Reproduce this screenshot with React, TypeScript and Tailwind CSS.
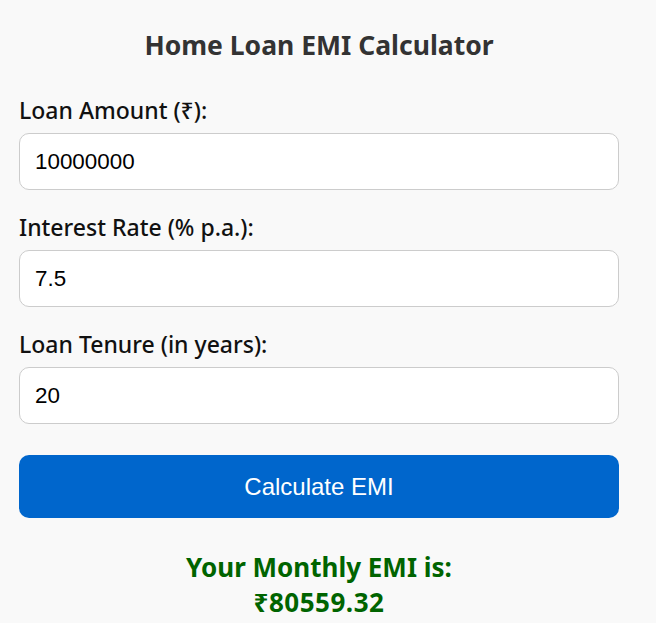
export default function App() {
  const labelCls = "block text-[23px] leading-[24px] font-medium text-[#111] mb-[11px]";
  const inputCls =
    "w-full h-[57px] rounded-[10px] border border-[#cccccc] bg-white px-[15px] text-[22.4px] text-black outline-none";
  const arial = { fontFamily: '"Liberation Sans", Arial, sans-serif' };
  return (
    <div className="min-h-screen bg-[#f9f9f9] pt-[30px] pl-[19px]" style={{ fontFamily: '"Noto Sans", sans-serif' }}>
      <div className="w-[600px] flex flex-col">
        <h2 className="text-center text-[26.5px] leading-[30px] font-bold text-[#333] mb-[38px]">Home Loan EMI Calculator</h2>

        <label className={labelCls}>Loan Amount (₹):</label>
        <input className={inputCls} style={arial} defaultValue="10000000" />

        <label className={labelCls + " mt-[25px]"}>Interest Rate (% p.a.):</label>
        <input className={inputCls} style={arial} defaultValue="7.5" />

        <label className={labelCls + " mt-[25px]"}>Loan Tenure (in years):</label>
        <input className={inputCls} style={arial} defaultValue="20" />

        <button className="mt-[31px] h-[63px] w-full rounded-[10px] bg-[#0066cc] text-white text-[24px]" style={arial}>
          Calculate EMI
        </button>

        <div className="mt-[32px] text-center text-[26px] leading-[35px] font-bold text-[#006400]">
          <div>Your Monthly EMI is:</div>
          <div className="tracking-[0.5px]">₹80559.32</div>
        </div>
      </div>
    </div>
  );
}
